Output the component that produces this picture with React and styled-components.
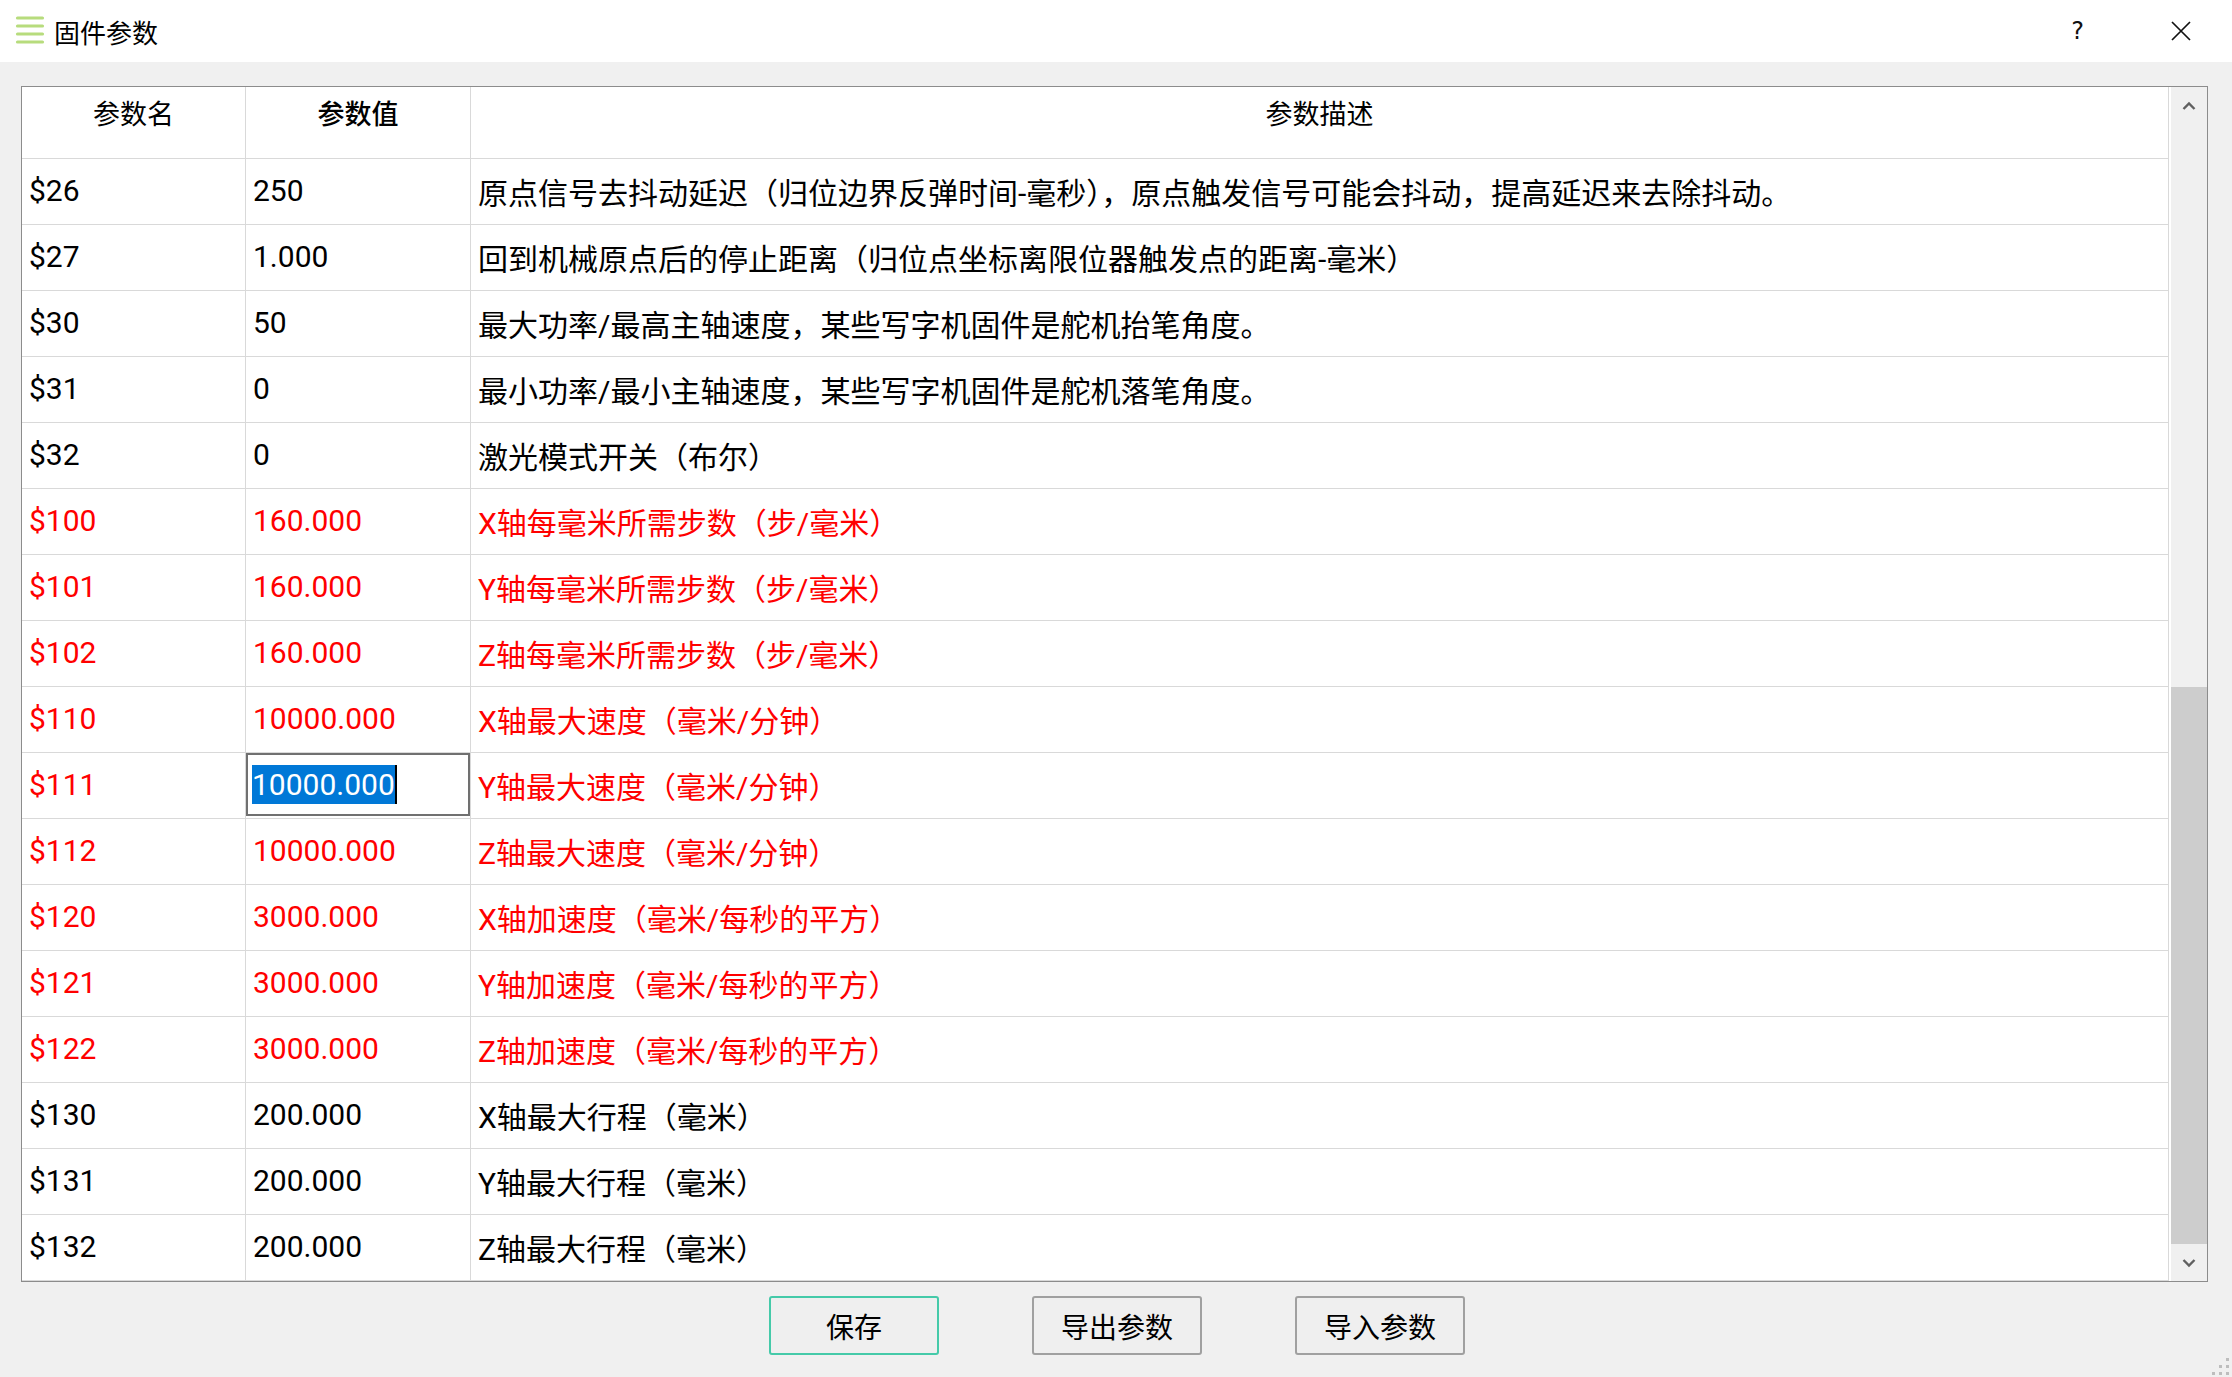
import React from 'react';
import styled, { createGlobalStyle } from 'styled-components';

const GlobalStyle = createGlobalStyle`
    html, body {
        margin: 0;
        padding: 0;
        background: #f0f0f0;
    }
    body {
        font-family: Roboto, "Noto Sans CJK SC", sans-serif;
    }
`

const Window = styled.div`
    position: relative;
    width: 2232px;
    height: 1377px;
    display: flex;
    flex-direction: column;
    background: #f0f0f0;
    overflow: hidden;
`

const TitleBar = styled.div`
    height: 62px;
    flex: none;
    display: flex;
    align-items: center;
    background: #ffffff;
    padding: 0 40px 0 15px;
    box-sizing: border-box;
`

const TitleText = styled.div`
    margin-left: 9px;
    font-family: "Noto Sans CJK SC", sans-serif;
    font-size: 26px;
    color: #000;
    flex: 1;
`

const HelpMark = styled.div`
    font-family: "DejaVu Sans", sans-serif;
    font-size: 24px;
    color: #111;
    margin-right: 86px;
`

const Body = styled.div`
    flex: 1;
    display: flex;
    flex-direction: column;
    padding: 24px 24px 0 21px;
`

const Frame = styled.div`
    height: 1196px;
    box-sizing: border-box;
    border: 1px solid #8c8c8c;
    background: #ffffff;
    display: flex;
`

const TableArea = styled.div`
    flex: 1;
    display: flex;
    flex-direction: column;
`

const Row = styled.div`
    display: grid;
    grid-template-columns: 224px 225px 1fr;
    height: ${({ $header }) => ($header ? '72px' : '66px')};
    box-sizing: border-box;
    border-bottom: 1px solid #d9d9d9;
`

const Cell = styled.div`
    display: flex;
    align-items: center;
    box-sizing: border-box;
    border-right: 1px solid #d9d9d9;
    padding-left: 7px;
    padding-bottom: 2px;
    font-size: 30px;
    white-space: nowrap;
    overflow: hidden;
    color: ${({ $red }) => ($red ? '#ff0000' : '#000000')};
`

const EditCell = styled.div`
    display: flex;
    align-items: flex-start;
    box-sizing: border-box;
    border-right: 1px solid #d9d9d9;
`

const HeadCell = styled.div`
    display: flex;
    justify-content: center;
    align-items: center;
    padding-bottom: 20px;
    box-sizing: border-box;
    border-right: 1px solid #d9d9d9;
    font-family: "Noto Sans CJK SC", sans-serif;
    font-size: 27px;
    font-weight: ${({ $bold }) => ($bold ? 500 : 400)};
    color: #000;
`

const Editor = styled.div`
    flex: 1;
    display: flex;
    align-items: center;
    box-sizing: border-box;
    height: 63px;
    border: 2px solid #707070;
    padding-left: 4px;
    font-size: 30px;
    color: #000;
`

const Selection = styled.span`
    background: #0078d7;
    color: #ffffff;
    line-height: 39px;
`

const Caret = styled.span`
    width: 2px;
    height: 39px;
    background: #000;
`

const ScrollBar = styled.div`
    width: 36px;
    margin-left: 2px;
    background: #f0f0f0;
    display: flex;
    flex-direction: column;
`

const ScrollButton = styled.div`
    height: 37px;
    flex: none;
    display: flex;
    align-items: center;
    justify-content: center;
`

const Track = styled.div`
    flex: 1;
    display: flex;
    flex-direction: column;
    justify-content: flex-end;
`

const Thumb = styled.div`
    height: 557px;
    background: #cdcdcd;
`

const Footer = styled.div`
    display: flex;
    gap: 93px;
    padding: 14px 0 0 748px;
`

const Button = styled.div`
    width: 170px;
    height: 59px;
    flex: none;
    box-sizing: border-box;
    border: 2px solid ${({ $primary }) => ($primary ? '#45caa9' : '#a0a0a0')};
    border-radius: 3px;
    display: flex;
    align-items: center;
    justify-content: center;
    background: #efefef;
    font-family: "Noto Sans CJK SC", sans-serif;
    font-size: 28px;
    color: #000;
`

const Grip = styled.div`
    position: absolute;
    right: 3px;
    bottom: 2px;
    width: 17px;
    height: 17px;
`

const rows = [
    ['$26', '250', '原点信号去抖动延迟（归位边界反弹时间-毫秒），原点触发信号可能会抖动，提高延迟来去除抖动。', false],
    ['$27', '1.000', '回到机械原点后的停止距离（归位点坐标离限位器触发点的距离-毫米）', false],
    ['$30', '50', '最大功率/最高主轴速度，某些写字机固件是舵机抬笔角度。', false],
    ['$31', '0', '最小功率/最小主轴速度，某些写字机固件是舵机落笔角度。', false],
    ['$32', '0', '激光模式开关（布尔）', false],
    ['$100', '160.000', 'X轴每毫米所需步数（步/毫米）', true],
    ['$101', '160.000', 'Y轴每毫米所需步数（步/毫米）', true],
    ['$102', '160.000', 'Z轴每毫米所需步数（步/毫米）', true],
    ['$110', '10000.000', 'X轴最大速度（毫米/分钟）', true],
    ['$111', '10000.000', 'Y轴最大速度（毫米/分钟）', true, true],
    ['$112', '10000.000', 'Z轴最大速度（毫米/分钟）', true],
    ['$120', '3000.000', 'X轴加速度（毫米/每秒的平方）', true],
    ['$121', '3000.000', 'Y轴加速度（毫米/每秒的平方）', true],
    ['$122', '3000.000', 'Z轴加速度（毫米/每秒的平方）', true],
    ['$130', '200.000', 'X轴最大行程（毫米）', false],
    ['$131', '200.000', 'Y轴最大行程（毫米）', false],
    ['$132', '200.000', 'Z轴最大行程（毫米）', false],
];

function MenuIcon() {
    return (
        <svg width="30" height="30" viewBox="0 0 30 30">
            {[2, 10, 18, 26].map(y => (
                <line key={y} x1="2.5" y1={y} x2="27.5" y2={y} stroke="#b7dc7d" strokeWidth="3.2" strokeLinecap="round" />
            ))}
        </svg>
    );
}

function CloseIcon() {
    return (
        <svg width="22" height="22" viewBox="0 0 22 22">
            <path d="M2 2 L20 20 M20 2 L2 20" stroke="#111" strokeWidth="1.7" fill="none" />
        </svg>
    );
}

function Chevron({ down }) {
    return (
        <svg width="14" height="10" viewBox="0 0 14 10">
            <path d={down ? 'M1.5 2 L7 7.5 L12.5 2' : 'M1.5 8 L7 2.5 L12.5 8'} stroke="#606060" strokeWidth="2.4" fill="none" />
        </svg>
    );
}

function GripDots() {
    const dots = [[14, 0], [7, 7], [14, 7], [0, 14], [7, 14], [14, 14]];
    return (
        <svg width="17" height="17" viewBox="0 0 17 17">
            {dots.map(([x, y]) => <rect key={`${x}-${y}`} x={x} y={y} width="3" height="3" fill="#bdbdbd" />)}
        </svg>
    );
}

export default function App() {
    return (
        <Window>
            <GlobalStyle />
            <TitleBar>
                <MenuIcon />
                <TitleText>固件参数</TitleText>
                <HelpMark>?</HelpMark>
                <CloseIcon />
            </TitleBar>
            <Body>
                <Frame>
                    <TableArea>
                        <Row $header>
                            <HeadCell>参数名</HeadCell>
                            <HeadCell $bold>参数值</HeadCell>
                            <HeadCell>参数描述</HeadCell>
                        </Row>
                        {rows.map(([name, value, desc, red, editing]) => (
                            <Row key={name}>
                                <Cell $red={red}>{name}</Cell>
                                {editing ? (
                                    <EditCell>
                                        <Editor>
                                            <Selection>{value}</Selection>
                                            <Caret />
                                        </Editor>
                                    </EditCell>
                                ) : (
                                    <Cell $red={red}>{value}</Cell>
                                )}
                                <Cell $red={red}>{desc}</Cell>
                            </Row>
                        ))}
                    </TableArea>
                    <ScrollBar>
                        <ScrollButton><Chevron /></ScrollButton>
                        <Track><Thumb /></Track>
                        <ScrollButton><Chevron down /></ScrollButton>
                    </ScrollBar>
                </Frame>
                <Footer>
                    <Button $primary>保存</Button>
                    <Button>导出参数</Button>
                    <Button>导入参数</Button>
                </Footer>
            </Body>
            <Grip><GripDots /></Grip>
        </Window>
    );
}
